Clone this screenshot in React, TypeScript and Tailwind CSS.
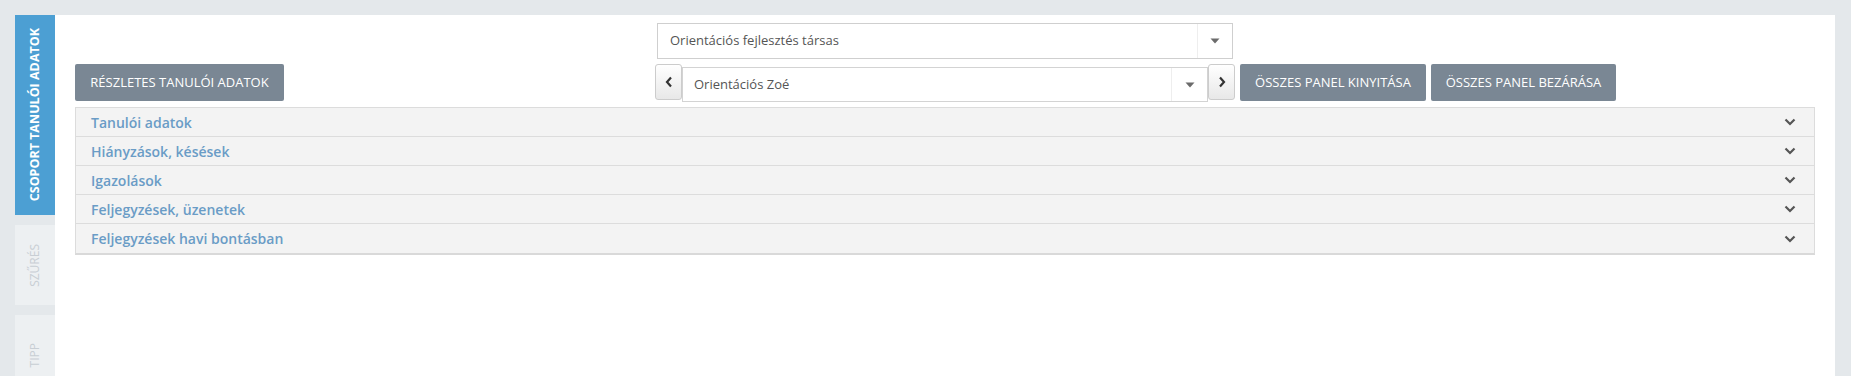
import React from "react";

const font = { fontFamily: '"Open Sans", "Noto Sans", sans-serif' };

function Chevron() {
  return (
    <svg width="12" height="8" viewBox="0 0 12 8" className="block">
      <polyline points="1.5,1.5 6,6 10.5,1.5" fill="none" stroke="#555" strokeWidth="2.2" />
    </svg>
  );
}

function Caret() {
  return (
    <svg width="10" height="6" viewBox="0 0 10 6" className="block">
      <polygon points="0.5,0.5 9.5,0.5 5,5.5" fill="#6b6b6b" />
    </svg>
  );
}

function Arrow({ dir }: { dir: "l" | "r" }) {
  return (
    <svg width="8" height="12" viewBox="0 0 8 12" className="block">
      <polyline
        points={dir === "l" ? "6,1.5 2,6 6,10.5" : "2,1.5 6,6 2,10.5"}
        fill="none"
        stroke="#333"
        strokeWidth="2.2"
      />
    </svg>
  );
}

const panels = [
  "Tanulói adatok",
  "Hiányzások, késések",
  "Igazolások",
  "Feljegyzések, üzenetek",
  "Feljegyzések havi bontásban",
];

export default function App() {
  return (
    <div className="w-[1851px] h-[376px] overflow-hidden bg-[#e4e8eb] pt-[15px] pl-[15px] pr-[16px] flex" style={font}>
      <div className="w-[40px] flex flex-col gap-[10px] shrink-0">
        <div className="h-[200px] shrink-0 bg-[#4c9fd3] flex items-center justify-center">
          <span className="[writing-mode:vertical-rl] rotate-180 text-white font-bold text-[12.5px] whitespace-nowrap">
            CSOPORT TANULÓI ADATOK
          </span>
        </div>
        <div className="h-[80px] shrink-0 bg-[#edf0f2] flex items-center justify-center">
          <span className="[writing-mode:vertical-rl] rotate-180 text-[#c8ced4] text-[12px] whitespace-nowrap">
            SZŰRÉS
          </span>
        </div>
        <div className="h-[80px] shrink-0 bg-[#edf0f2] flex items-center justify-center">
          <span className="[writing-mode:vertical-rl] rotate-180 text-[#c8ced4] text-[12px] whitespace-nowrap">
            TIPP
          </span>
        </div>
      </div>
      <div className="flex-1 bg-white px-[20px] pt-[8px]">
        <div className="grid grid-cols-[1fr_580px_1fr]">
          <div />
          <div className="flex justify-center">
            <div className="w-[576px] h-[36px] border border-[#cfcfcf] bg-white flex items-center">
              <div className="flex-1 pl-[12px] text-[13px] text-[#555]">Orientációs fejlesztés társas</div>
              <div className="w-[35px] h-full border-l border-[#eeeeee] flex items-center justify-center">
                <Caret />
              </div>
            </div>
          </div>
          <div />
        </div>
        <div className="grid grid-cols-[1fr_580px_1fr] mt-[5px] h-[38px]">
          <div className="flex items-start">
            <button className="h-[37px] w-[209px] bg-[#7a8794] rounded-[2px] text-white text-[13px] whitespace-nowrap">
              RÉSZLETES TANULÓI ADATOK
            </button>
          </div>
          <div className="flex items-start">
            <div className="w-[27px] h-[36px] border border-[#cccccc] rounded-[3px] bg-gradient-to-b from-white to-[#e8e8e8] flex items-center justify-center">
              <Arrow dir="l" />
            </div>
            <div className="w-[526px] h-[35px] mt-[3px] border border-[#d3d3d3] bg-white flex items-center">
              <div className="flex-1 pl-[11px] text-[13px] text-[#555]">Orientációs Zoé</div>
              <div className="w-[36px] h-full border-l border-[#eeeeee] flex items-center justify-center">
                <Caret />
              </div>
            </div>
            <div className="w-[27px] h-[36px] border border-[#cccccc] rounded-[3px] bg-gradient-to-b from-white to-[#e8e8e8] flex items-center justify-center">
              <Arrow dir="r" />
            </div>
          </div>
          <div className="flex items-start gap-[5px] pl-[5px]">
            <button className="h-[37px] w-[186px] bg-[#7a8794] rounded-[2px] text-white text-[13px] whitespace-nowrap">
              ÖSSZES PANEL KINYITÁSA
            </button>
            <button className="h-[37px] w-[185px] bg-[#7a8794] rounded-[2px] text-white text-[13px] whitespace-nowrap">
              ÖSSZES PANEL BEZÁRÁSA
            </button>
          </div>
        </div>
        <div className="mt-[5px] border border-[#dcdcdc] border-b-2 border-b-[#d9d9d9]">
          {panels.map((p, i) => (
            <div
              key={p}
              className={
                "h-[29px] bg-[#f3f3f3] flex items-center justify-between pl-[15px] pr-[18px] " +
                (i < panels.length - 1 ? "border-b border-[#dcdcdc]" : "")
              }
            >
              <span className="text-[14px] font-semibold text-[#6a9cc6]">{p}</span>
              <Chevron />
            </div>
          ))}
        </div>
      </div>
    </div>
  );
}
